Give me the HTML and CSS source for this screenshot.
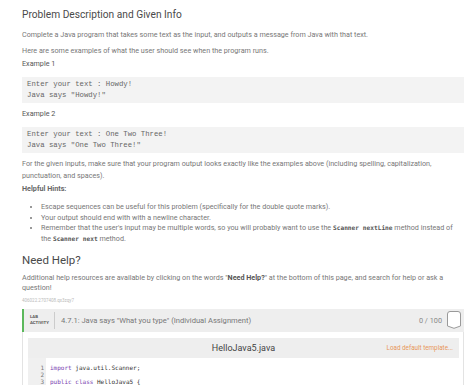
FILE: index.html
```html
<!DOCTYPE html>
<html>
<head>
<meta charset="utf-8">
<link rel="stylesheet" href="styles.css">
</head>
<body>
<div class="page">
  <h1 class="title">Problem Description and Given Info</h1>
  <p class="p p1">Complete a Java program that takes some text as the input, and outputs a message from Java with that text.</p>
  <p class="p p2">Here are some examples of what the user should see when the program runs.</p>
  <div class="label">Example 1</div>
  <pre class="codebox">Enter your text : Howdy!
Java says "Howdy!"</pre>
  <div class="label label2">Example 2</div>
  <pre class="codebox">Enter your text : One Two Three!
Java says "One Two Three!"</pre>
  <p class="p given">For the given inputs, make sure that your program output looks exactly like the examples above (including spelling, capitalization, punctuation, and spaces).</p>
  <div class="hints-title">Helpful Hints:</div>
  <ul class="hints">
    <li>Escape sequences can be useful for this problem (specifically for the double quote marks).</li>
    <li>Your output should end with with a newline character.</li>
    <li>Remember that the user's input may be multiple words, so you will probably want to use the <code>Scanner nextLine</code> method instead of the <code>Scanner next</code> method.</li>
  </ul>
  <h2 class="need">Need Help?</h2>
  <p class="p help">Additional help resources are available by clicking on the words "<b>Need Help?</b>" at the bottom of this page, and search for help or ask a question!</p>
  <div class="tiny">406022.2707408.qx3zqy7</div>
  <div class="lab">
    <div class="lab-tag">LAB<br>ACTIVITY</div>
    <div class="lab-title">4.7.1: Java says "What you type" (Individual Assignment)</div>
    <div class="lab-score">0 / 100</div>
    <svg class="badge" width="16" height="18" viewBox="0 0 16 18"><path d="M1.5 3 Q1.5 0.5 4 0.5 H12 Q14.5 0.5 14.5 3 V15 L8 17.3 L1.5 15 Z" fill="#fff" stroke="#9a9a9a" stroke-width="1"/></svg>
  </div>
  <div class="lab-body">
    <div class="file-head">
      <span class="fname">HelloJava5.java</span>
      <span class="load">Load default template...</span>
    </div>
    <div class="editor">
      <div class="gutter"><div>1</div><div>2</div><div>3</div></div>
      <div class="lines">
        <div><span class="kw">import</span> java.util.Scanner;</div>
        <div>&nbsp;</div>
        <div><span class="kw">public</span> <span class="kw">class</span> HelloJava5 {</div>
      </div>
    </div>
  </div>
</div>
</body>
</html>
```
FILE: styles.css
```css
html, body { margin: 0; padding: 0; background: #fff; }
body { font-family: Roboto, "Noto Sans", sans-serif; color: #777; overflow: hidden; }
.page { padding: 8px 10px 0 22px; }
.title { margin: 0; font-size: 10.2px; line-height: 14px; font-weight: 400; color: #4a4a4a; }
.p { margin: 0; font-size: 7.2px; line-height: 10px; color: #777; }
.p1 { margin-top: 8px; }
.p2 { margin-top: 6px; }
.label { margin-top: 3px; font-size: 7.2px; line-height: 10px; color: #555; }
.label2 { margin-top: 6px; }
.codebox { margin: 8px 0 0; background: #f3f3f3; padding: 2px 5px; font-family: "Liberation Mono", monospace; font-size: 7.3px; line-height: 11px; color: #666; }
.given { margin-top: 5px; line-height: 12px; padding-right: 20px; }
.hints-title { margin-top: 2px; font-size: 7.2px; line-height: 10px; font-weight: 700; color: #666; }
.hints { margin: 8px 0 0; padding: 0 4px 0 19px; font-size: 7.2px; line-height: 10.7px; list-style: disc; }
.hints code { font-family: "DejaVu Sans Mono", monospace; font-size: 6.2px; color: #555; font-weight: 700; }
.need { margin: 8px 0 0; font-size: 11.5px; line-height: 14px; font-weight: 400; color: #4a4a4a; }
.help { margin-top: 6px; line-height: 10px; padding-right: 0; }
.help b { color: #555; }
.tiny { margin-top: 4px; font-size: 4.5px; line-height: 8px; color: #bbb; }
.lab { margin-top: 4px; height: 23px; background: #eee; border-left: 2px solid #5cb85c; display: flex; align-items: center; padding: 0 2px 0 6px; }
.lab-tag { font-size: 4.3px; line-height: 6px; font-weight: 700; color: #555; padding-right: 5px; border-right: 1px solid #ccc; height: 17px; display: flex; flex-direction: column; justify-content: center; }
.lab-title { margin-left: 6px; font-size: 7.6px; color: #777; flex: 1; }
.lab-score { font-size: 7.3px; color: #888; margin-right: 4px; }
.badge { display: block; }
.lab-body { border: 1px solid #e3e3e3; border-top: 0; padding: 6px 4px 0 5px; height: 60px; }
.file-head { background: #eee; height: 20px; display: flex; align-items: center; position: relative; padding: 0 8px; }
.fname { flex: 1; text-align: center; font-size: 9px; color: #444; }
.load { position: absolute; right: 6px; font-size: 6.3px; color: #e8965a; }
.editor { display: flex; font-family: "DejaVu Sans Mono", monospace; font-size: 6px; line-height: 7px; color: #333; padding-top: 6px; }
.gutter { width: 16px; background: #f0f0f0; text-align: right; padding-right: 2px; color: #777; margin-top: -6px; padding-top: 6px; }
.lines { padding-left: 4px; }
.kw { color: #7a3fb0; }
```
